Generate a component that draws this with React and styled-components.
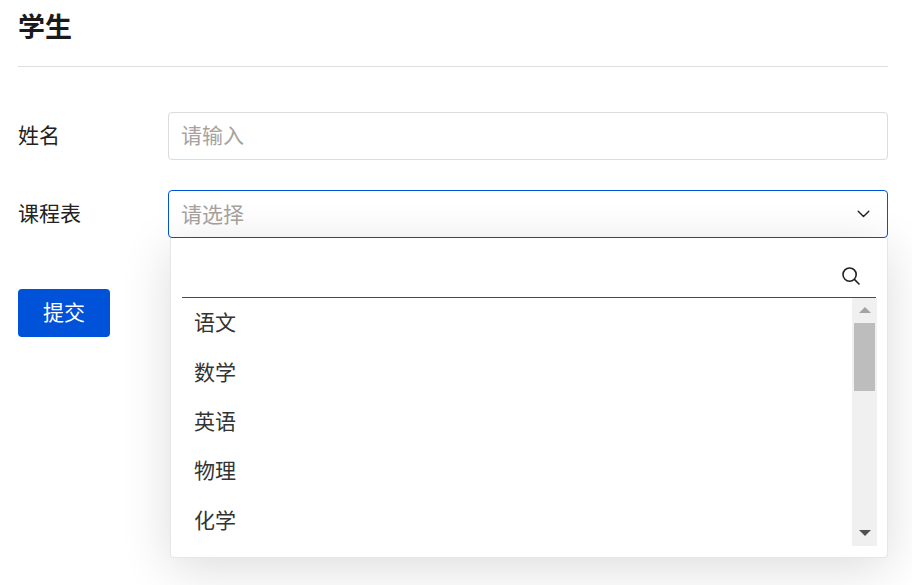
import React from "react";
import styled, { createGlobalStyle } from "styled-components";

const Global = createGlobalStyle`
  html, body { margin: 0; padding: 0; background: #fff; overflow: hidden; }
  body { font-family: "Noto Sans CJK SC", "Liberation Sans", sans-serif; }
  * { box-sizing: border-box; }
`;

const Page = styled.div`
  width: 912px;
  height: 585px;
  padding: 0 24px 0 18px;
  color: #1f1f1f;
`;

const Title = styled.h1`
  margin: 0;
  height: 67px;
  padding-top: 7px;
  border-bottom: 1px solid #dedede;
  font-size: 27px;
  line-height: 38px;
  font-weight: 700;
  color: #1a1a1a;
`;

const Form = styled.form`
  display: flex;
  flex-direction: column;
  gap: 30px;
  padding-top: 45px;
`;

const Row = styled.div`
  display: flex;
  align-items: center;
  height: 48px;
`;

const Actions = styled.div`
  margin-top: 21px;
`;

const Label = styled.label`
  width: 150px;
  flex: none;
  font-size: 21px;
  line-height: 44px;
  height: 48px;
  color: #222;
`;

const Control = styled.div`
  position: relative;
  flex: 1;
  height: 48px;
  display: flex;
  align-items: center;
  justify-content: space-between;
  padding: 0 17px 0 12px;
  border: 1px solid ${(p) => (p.$active ? "#0052d9" : "#dcdcdc")};
  border-radius: 4px;
  background: #fff;
`;

const Placeholder = styled.span`
  font-size: 21px;
  line-height: ${(p) => (p.$select ? "45px" : "43px")};
  height: 46px;
  color: #a8a29e;
`;

const Menu = styled.div`
  position: absolute;
  top: 47px;
  left: 1px;
  right: -1px;
  height: 320px;
  padding: 0 10px 11px 11px;
  background: #fff;
  border-radius: 0 0 4px 4px;
  border: 1px solid #e6e6e6;
  border-top: none;
  box-shadow: 0 10px 50px rgba(0, 0, 0, 0.14);
  display: flex;
  flex-direction: column;
  z-index: 2;
`;

const SearchBar = styled.div`
  flex: none;
  height: 60px;
  margin-right: 1px;
  display: flex;
  align-items: center;
  justify-content: flex-end;
  padding: 16px 16px 0 0;
  border-bottom: 1px solid #0052d9;
  color: #222;
`;

const ListArea = styled.div`
  flex: 1;
  display: flex;
  justify-content: space-between;
`;

const List = styled.ul`
  margin: 0;
  padding: 0 0 0 12px;
  list-style: none;
`;

const Option = styled.li`
  height: 49.4px;
  display: flex;
  align-items: center;
  font-size: 21px;
  color: #333;
  position: relative;
  top: -1.5px;
`;

const Track = styled.div`
  width: 25px;
  height: 248px;
  background: #f0f0f0;
  padding: 0 2px;
  display: flex;
  flex-direction: column;
  align-items: center;
`;

const Arrow = styled.span`
  flex: none;
  width: 0;
  height: 0;
  border-left: 6px solid transparent;
  border-right: 6px solid transparent;
  ${(p) =>
    p.$down
      ? "border-top: 6px solid #505050; margin-top: auto; margin-bottom: 10px;"
      : "border-bottom: 6px solid #a3a3a3; margin-top: 9px;"}
`;

const Thumb = styled.div`
  width: 21px;
  height: 68px;
  margin-top: 10px;
  background: #bdbdbd;
`;

const Submit = styled.button`
  display: block;
  width: 92px;
  height: 48px;
  border: none;
  border-radius: 4px;
  background: #0052d9;
  color: #fff;
  font: inherit;
  font-size: 21px;
  line-height: 44px;
  padding: 0 0 4px;
`;

const options = ["语文", "数学", "英语", "物理", "化学"];

const Chevron = () => (
  <svg width="13" height="8" viewBox="0 0 13 8" fill="none" stroke="#222" strokeWidth="1.4" strokeLinecap="round" strokeLinejoin="round">
    <path d="M1.2 1.2 L6.5 6.5 L11.8 1.2" />
  </svg>
);

const Magnifier = () => (
  <svg width="18" height="18" viewBox="0 0 18 18" fill="none" stroke="#222" strokeWidth="1.6" strokeLinecap="round">
    <circle cx="7.6" cy="7.6" r="6.6" />
    <path d="M12.4 12.4 L17 17" />
  </svg>
);

export default function App() {
  return (
    <Page>
      <Global />
      <Title>学生</Title>
      <Form>
        <Row>
          <Label>姓名</Label>
          <Control>
            <Placeholder>请输入</Placeholder>
          </Control>
        </Row>
        <Row>
          <Label>课程表</Label>
          <Control $active>
            <Placeholder $select>请选择</Placeholder>
            <Chevron />
            <Menu>
              <SearchBar>
                <Magnifier />
              </SearchBar>
              <ListArea>
                <List>
                  {options.map((o) => (
                    <Option key={o}>{o}</Option>
                  ))}
                </List>
                <Track>
                  <Arrow />
                  <Thumb />
                  <Arrow $down />
                </Track>
              </ListArea>
            </Menu>
          </Control>
        </Row>
        <Actions>
          <Submit type="button">提交</Submit>
        </Actions>
      </Form>
    </Page>
  );
}
